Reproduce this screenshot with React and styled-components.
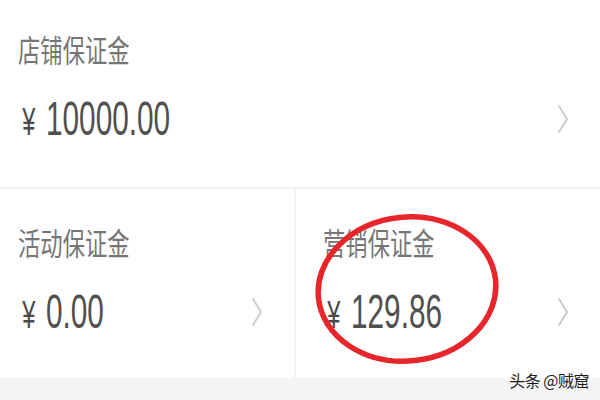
import React from "react";
import styled, { createGlobalStyle } from "styled-components";

const Global = createGlobalStyle`
  html, body { margin: 0; padding: 0; background: #ffffff; }
  body { font-family: "Liberation Sans", "Noto Sans CJK SC", sans-serif; }
`;

const Page = styled.div`
  position: relative;
  width: 600px;
  height: 400px;
  overflow: hidden;
  display: flex;
  flex-direction: column;
  background: #fff;
`;

const TopCard = styled.div`
  height: 187px;
  border-bottom: 2px solid #f2f2f2;
`;

const BottomRow = styled.div`
  display: grid;
  grid-template-columns: 296px 1fr;
  height: 189px;
  .left {
    border-right: 2px solid #f3f3f3;
  }
`;

const Footer = styled.div`
  flex: 1;
  background: #f4f4f4;
`;

const Card = styled.div`
  display: flex;
  flex-direction: column;
  height: 100%;
  box-sizing: border-box;
  padding: ${(p) => p.$pt}px 31px 0 ${(p) => p.$pl}px;
`;

const Label = styled.div`
  font-family: "Noto Sans CJK SC", sans-serif;
  font-size: 31px;
  line-height: 30px;
  height: 30px;
  color: #767676;
  white-space: nowrap;
  transform: scaleX(0.72);
  transform-origin: left center;
`;

const AmountRow = styled.div`
  display: flex;
  align-items: center;
  justify-content: space-between;
  margin-top: 32px;
  height: 48px;
`;

const Amount = styled.div`
  font-family: "Liberation Sans", sans-serif;
  font-size: 48px;
  line-height: 48px;
  color: #505050;
  white-space: nowrap;
  transform: scaleX(0.62);
  transform-origin: left center;
  .yen {
    font-size: 38px;
    margin: 0 17px 0 7px;
    color: #4a4a4a;
  }
`;

const Chevron = styled.svg`
  width: 12px;
  height: 28px;
  flex: none;
  margin-top: -2px;
`;

const Watermark = styled.div`
  position: absolute;
  right: 11px;
  bottom: 11px;
  font-family: "Noto Sans CJK SC", sans-serif;
  font-size: 16px;
  line-height: 18px;
  color: #1c1c1c;
  text-shadow: 0 0 2px #fff, 0 0 2px #fff;
  letter-spacing: -0.5px;
`;

const Circle = styled.svg`
  position: absolute;
  left: 0;
  top: 0;
  width: 600px;
  height: 400px;
  pointer-events: none;
`;

const Arrow = () => (
  <Chevron viewBox="0 0 12 28">
    <polyline
      points="2,1 10,14 2,27"
      fill="none"
      stroke="#cdcdcd"
      strokeWidth="2"
      strokeLinecap="round"
      strokeLinejoin="round"
    />
  </Chevron>
);

const Deposit = ({ label, value, pt, pl }) => (
  <Card $pt={pt} $pl={pl}>
    <Label>{label}</Label>
    <AmountRow>
      <Amount>
        <span className="yen">¥</span>
        {value}
      </Amount>
      <Arrow />
    </AmountRow>
  </Card>
);

export default function App() {
  return (
    <>
      <Global />
      <Page>
        <TopCard>
          <Deposit label="店铺保证金" value="10000.00" pt={34} pl={18} />
        </TopCard>
        <BottomRow>
          <div className="left">
            <Deposit label="活动保证金" value="0.00" pt={38} pl={18} />
          </div>
          <div>
            <Deposit label="营销保证金" value="129.86" pt={38} pl={27} />
          </div>
        </BottomRow>
        <Footer />
        <Circle viewBox="0 0 600 400">
          <ellipse
            cx="407"
            cy="289"
            rx="89"
            ry="72"
            fill="none"
            stroke="#e7262c"
            strokeWidth="5.5"
            transform="rotate(-6 407 289)"
          />
        </Circle>
        <Watermark>头条 @贼窟</Watermark>
      </Page>
    </>
  );
}
